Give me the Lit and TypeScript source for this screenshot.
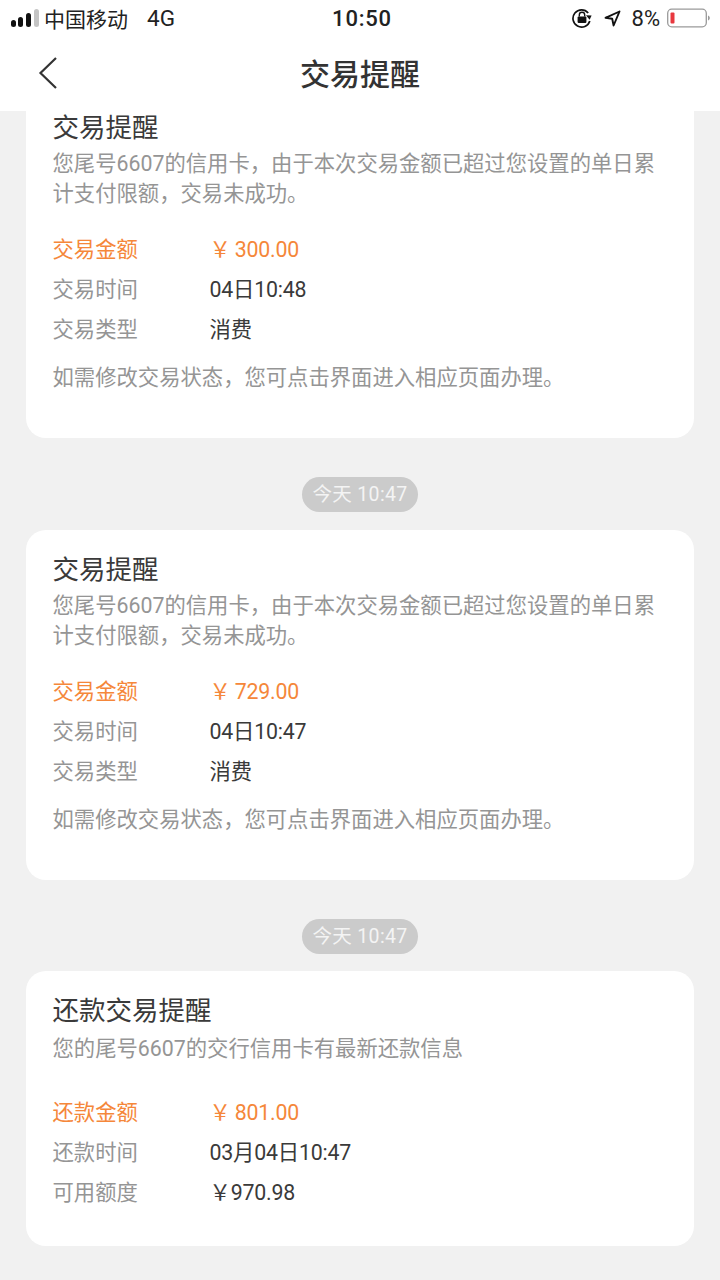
import { LitElement, html, css } from 'lit';
import { customElement } from 'lit/decorators.js';

const notices = [
  {
    time: '',
    title: '交易提醒',
    desc: '您尾号6607的信用卡，由于本次交易金额已超过您设置的单日累计支付限额，交易未成功。',
    rows: [['交易金额', '￥ 300.00'], ['交易时间', '04日10:48'], ['交易类型', '消费']],
    foot: '如需修改交易状态，您可点击界面进入相应页面办理。',
  },
  {
    time: '今天 10:47',
    title: '交易提醒',
    desc: '您尾号6607的信用卡，由于本次交易金额已超过您设置的单日累计支付限额，交易未成功。',
    rows: [['交易金额', '￥ 729.00'], ['交易时间', '04日10:47'], ['交易类型', '消费']],
    foot: '如需修改交易状态，您可点击界面进入相应页面办理。',
  },
  {
    time: '今天 10:47',
    title: '还款交易提醒',
    desc: '您的尾号6607的交行信用卡有最新还款信息',
    rows: [['还款金额', '￥ 801.00'], ['还款时间', '03月04日10:47'], ['可用额度', '￥970.98']],
    foot: '',
  },
];

@customElement('app-root')
export class AppRoot extends LitElement {
  static styles = css`
    :host {
      display: block;
      width: 720px;
      height: 1280px;
      overflow: hidden;
      background: #f1f1f1;
      color: #333;
      font-family: Roboto, "Noto Sans CJK SC", sans-serif;
    }
    .top {
      position: relative;
      z-index: 1;
      height: 111px;
      background: #fff;
    }
    .status {
      display: grid;
      grid-template-columns: 1fr auto 1fr;
      align-items: center;
      height: 36px;
      padding: 0 10px 0 11px;
      font-size: 21px;
      color: #222;
    }
    .status-left, .status-right {
      display: flex;
      align-items: center;
    }
    .status-right { justify-content: flex-end; }
    .signal { margin-right: 5px; }
    .net { margin-left: 19px; font-size: 22.5px; }
    .clock { font-weight: 500; font-size: 22px; letter-spacing: 0.8px; margin-left: 3px; }
    .lock { margin-right: 12px; }
    .arrow { margin-right: 11px; }
    .pct { margin-right: 7px; font-size: 22px; }
    .nav {
      display: flex;
      align-items: center;
      justify-content: center;
      position: relative;
      height: 75px;
    }
    .back { position: absolute; left: 38px; top: 20px; }
    .nav-title {
      margin-bottom: 4px;
      font-size: 30px;
      font-weight: 500;
      color: #333;
    }
    .list {
      display: flex;
      flex-direction: column;
      padding: 0 26px;
      margin-top: -23px;
    }
    .stamp {
      align-self: center;
      height: 35px;
      line-height: 35px;
      margin: 39px 0 18px;
      padding: 0 10px;
      border-radius: 18px;
      background: #cbcbcb;
      color: #f4f4f4;
      font-size: 19.5px;
      letter-spacing: 0.35px;
    }
    .card {
      background: #fff;
      border-radius: 20px;
      padding: 22px 26.5px 0;
    }
    .card.first { height: 350px; box-sizing: border-box; }
    .card.last { height: 275px; margin-top: -1px; box-sizing: border-box; }
    .title {
      font-size: 26.5px;
      line-height: 36px;
      color: #3a3a3a;
    }
    .desc, .foot {
      font-size: 21.33px;
      line-height: 30px;
      color: #959595;
    }
    .desc { margin-top: 3px; }
    .card.last .desc { margin-top: 5px; }
    .rows { margin-top: 21px; }
    .card.last .rows { margin-top: 29px; }
    .row {
      display: flex;
      font-size: 21.33px;
      line-height: 40px;
      color: #959595;
    }
    .row span:last-child { color: #3a3a3a; letter-spacing: -0.2px; word-spacing: -1px; }
    .row.hot, .row.hot span:last-child { color: #f5873a; }
    .label { width: 157px; }
    .foot { margin-top: 13px; }
  `;

  renderStatus() {
    return html`
      <div class="status">
        <div class="status-left">
          <svg class="signal" width="28" height="20" viewBox="0 0 28 20">
            <rect x="0" y="12" width="5" height="7" rx="2.5" fill="#111"/>
            <rect x="7" y="9" width="5" height="10" rx="2.5" fill="#111"/>
            <rect x="15" y="5" width="5" height="14" rx="2.5" fill="#111"/>
            <rect x="23" y="1" width="5" height="18" rx="2.5" fill="#c4c4c4"/>
          </svg>
          <span>中国移动</span>
          <span class="net">4G</span>
        </div>
        <div class="clock">10:50</div>
        <div class="status-right">
          <svg class="lock" width="20" height="20" viewBox="0 0 20 20" fill="none">
            <path d="M16.2 5A8.6 8.6 0 1 0 17.8 13" stroke="#111" stroke-width="1.7"/>
            <path d="M14 7.2L19.6 7.6L17.6 11.8Z" fill="#111"/>
            <rect x="5.6" y="8.5" width="8.8" height="6.5" rx="1" fill="#111"/>
            <path d="M7.3 8.5V7a2.7 2.7 0 0 1 5.4 0v1.5" stroke="#111" stroke-width="1.4"/>
          </svg>
          <svg class="arrow" width="17" height="17" viewBox="0 0 17 17" fill="none">
            <path d="M15.5 1.5L1.5 7.8L8.2 8.8L9.6 15.5Z" stroke="#111" stroke-width="1.9" stroke-linejoin="round"/>
          </svg>
          <span class="pct">8%</span>
          <svg width="43" height="20" viewBox="0 0 43 20" fill="none">
            <rect x="0.7" y="1.2" width="38.6" height="17.6" rx="4" stroke="#9a9a9a" stroke-width="1.3"/>
            <rect x="3.5" y="4.5" width="4" height="11" rx="1" fill="#e8383f"/>
            <path d="M41 7.5c1.2.4 1.8 1.3 1.8 2.5s-.6 2.1-1.8 2.5Z" fill="#9a9a9a"/>
          </svg>
        </div>
      </div>
    `;
  }

  render() {
    return html`
      <div class="top">
        ${this.renderStatus()}
        <div class="nav">
          <svg class="back" width="20" height="34" viewBox="0 0 20 34" fill="none">
            <path d="M18 2L2.5 17L18 32" stroke="#333" stroke-width="2.2"/>
          </svg>
          <div class="nav-title">交易提醒</div>
        </div>
      </div>
      <div class="list">
        ${notices.map((n, i) => html`
          ${n.time ? html`<div class="stamp">${n.time}</div>` : ''}
          <div class="card ${i === 2 ? 'last' : 'first'}">
            <div class="title">${n.title}</div>
            <div class="desc">${n.desc}</div>
            <div class="rows">
              ${n.rows.map((r, j) => html`
                <div class="row ${j === 0 ? 'hot' : ''}">
                  <span class="label">${r[0]}</span><span>${r[1]}</span>
                </div>
              `)}
            </div>
            ${n.foot ? html`<div class="foot">${n.foot}</div>` : ''}
          </div>
        `)}
      </div>
    `;
  }
}
